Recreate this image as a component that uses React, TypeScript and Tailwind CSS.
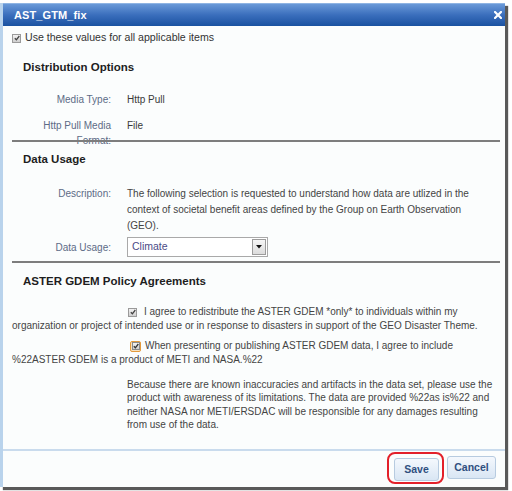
import React from "react";

function Check({ highlight = false }: { highlight?: boolean }) {
  if (highlight) {
    return (
      <span className="inline-flex items-center justify-center w-[11px] h-[11px] rounded-[2px] border border-[#e39a3c] bg-[#f7e2c0] align-middle">
        <span className="flex items-center justify-center w-[8px] h-[8px] border border-[#8a8a8a] bg-linear-to-b from-[#f2f2f2] to-[#cfcfcf]">
          <svg width="6" height="6" viewBox="0 0 6 6">
            <path d="M0.8 3.2 L2.4 4.8 L5.3 1" stroke="#333" strokeWidth="1.3" fill="none" />
          </svg>
        </span>
      </span>
    );
  }
  return (
    <span className="inline-flex items-center justify-center w-[9px] h-[9px] border border-[#9a9a9a] bg-linear-to-b from-[#f2f2f2] to-[#cfcfcf] align-middle">
      <svg width="6" height="6" viewBox="0 0 6 6">
        <path d="M0.8 3.2 L2.4 4.8 L5.3 1" stroke="#444" strokeWidth="1.3" fill="none" />
      </svg>
    </span>
  );
}

export default function App() {
  return (
    <div className="w-[512px] h-[491px] bg-white overflow-hidden font-['Liberation_Sans',Arial,sans-serif]">
      <div className="mt-[3px] w-[505px] h-[484px] flex flex-col bg-[#fbfdfd] border-l-[3px] border-[#b9d3ec] shadow-[3px_3px_1px_rgba(0,0,0,0.65)]">
        {/* Title bar */}
        <div className="h-[23px] flex items-center justify-between pl-[11px] pr-[3px] bg-linear-to-b from-[#6a99d8] via-[#3a6ebc] to-[#1a52a1] border-t border-[#8fb4e3]">
          <span className="text-white font-bold text-[11px] tracking-[0.1px]">AST_GTM_fix</span>
          <svg width="8" height="8" viewBox="0 0 8 8">
            <path d="M1 1 L7 7 M7 1 L1 7" stroke="#ffffff" strokeWidth="2.2" strokeLinecap="square" />
          </svg>
        </div>

        {/* Body */}
        <div className="flex-1 flex flex-col text-[10px] text-[#444]">
          <div className="mt-[4px] h-[16px] flex items-center pl-[9px]">
            <Check />
            <span className="ml-[4px] text-[10.6px] text-[#333]">Use these values for all applicable items</span>
          </div>

          <div className="mt-[14px] h-[16px] flex items-center pl-[20px] text-[11.5px] font-bold text-[#1e1e1e]">
            Distribution Options
          </div>

          <div className="mt-[15px] h-[16px] flex items-center">
            <span className="w-[108px] text-right text-[#5d6b86]">Media Type:</span>
            <span className="ml-[16px] text-[#3a3a3a]">Http Pull</span>
          </div>

          <div className="mt-[11px] h-[16px] flex items-start">
            <span className="w-[108px] text-right text-[#5d6b86] leading-[15px]">
              Http Pull Media
              <br />
              Format:
            </span>
            <span className="ml-[16px] text-[#3a3a3a] leading-[15px]">File</span>
          </div>

          <div className="relative z-10 mt-[6px] ml-[9px] w-[488px] h-[2px] bg-[#7d7d7d]" />

          <div className="mt-[10px] h-[16px] flex items-center pl-[20px] text-[11.5px] font-bold text-[#1e1e1e]">
            Data Usage
          </div>

          <div className="mt-[18px] flex items-start leading-[16px]">
            <span className="w-[108px] text-right text-[#5d6b86]">Description:</span>
            <span className="ml-[16px] whitespace-nowrap text-[#444]">
              The following selection is requested to understand how data are utlized in the
              <br />
              context of societal benefit areas defined by the Group on Earth Observation
              <br />
              (GEO).
            </span>
          </div>

          <div className="mt-[3px] h-[20px] flex items-center">
            <span className="w-[108px] text-right text-[#5d6b86]">Data Usage:</span>
            <div className="ml-[16px] w-[141px] h-[20px] border border-[#a9a9a9] bg-white flex items-center justify-between pl-[4px] pr-[1px]">
              <span className="text-[10.5px] text-[#4b4b86]">Climate</span>
              <span className="w-[14px] h-[16px] border border-[#9c9c9c] bg-linear-to-b from-[#f6f6f6] to-[#dcdcdc] flex items-center justify-center">
                <svg width="6" height="4" viewBox="0 0 6 4">
                  <path d="M0 0 L6 0 L3 3.5 Z" fill="#111" />
                </svg>
              </span>
            </div>
          </div>

          <div className="mt-[4px] ml-[9px] w-[488px] h-[2px] bg-[#7d7d7d]" />

          <div className="mt-[11px] h-[16px] flex items-center pl-[20px] text-[11.5px] font-bold text-[#1e1e1e]">
            ASTER GDEM Policy Agreements
          </div>

          <div className="mt-[15px] ml-[9px] leading-[14px] whitespace-nowrap text-[#444]">
            <span className="inline-block w-[116px]" />
            <Check />
            <span className="ml-[7px]">I agree to redistribute the ASTER GDEM *only* to individuals within my</span>
            <br />
            organization or project of intended use or in response to disasters in support of the GEO Disaster Theme.
          </div>

          <div className="mt-[6px] ml-[9px] leading-[14px] whitespace-nowrap text-[#444]">
            <span className="inline-block w-[118px]" />
            <Check highlight />
            <span className="ml-[4px]">When presenting or publishing ASTER GDEM data, I agree to include</span>
            <br />
            %22ASTER GDEM is a product of METI and NASA.%22
          </div>

          <div className="mt-[11px] ml-[124px] leading-[13.4px] whitespace-nowrap text-[#444]">
            Because there are known inaccuracies and artifacts in the data set, please use the
            <br />
            product with awareness of its limitations. The data are provided %22as is%22 and
            <br />
            neither NASA nor METI/ERSDAC will be responsible for any damages resulting
            <br />
            from use of the data.
          </div>
        </div>

        {/* Footer */}
        <div className="h-[38px] border-t-2 border-[#c9dbed] flex justify-end items-start pt-[5px] pr-[9px] gap-[8px]">
          <div className="relative">
            <button className="w-[45px] h-[23px] rounded-[3px] border border-[#b7cbe0] bg-linear-to-b from-[#f4f8fd] to-[#d9e6f4] text-[10.5px] font-bold text-[#2f4f7f]">
              Save
            </button>
            <div className="absolute left-[-7px] top-[-4px] w-[57px] h-[32px] border-2 border-[#e3202a] rounded-[8px]" />
          </div>
          <button className="w-[49px] h-[23px] rounded-[3px] border border-[#b7cbe0] bg-linear-to-b from-[#f4f8fd] to-[#d9e6f4] text-[10.5px] font-bold text-[#2f4f7f]">
            Cancel
          </button>
        </div>
      </div>
    </div>
  );
}
